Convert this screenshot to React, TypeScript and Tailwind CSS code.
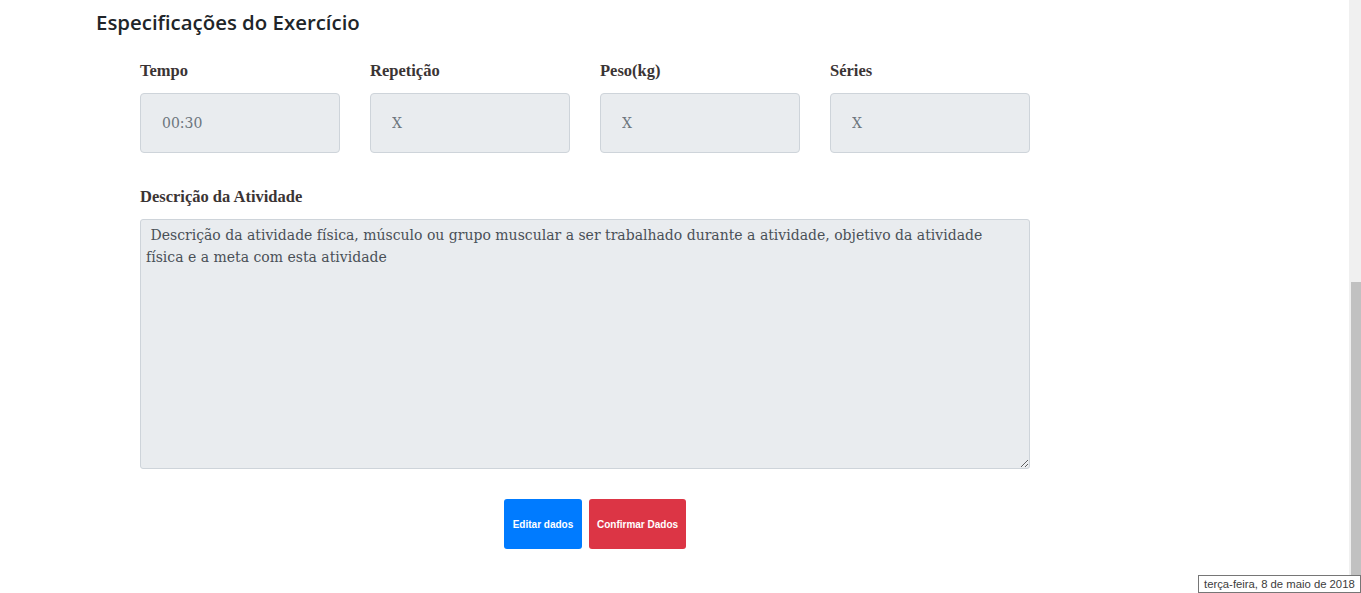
import React from 'react';

const fields = [
  { label: 'Tempo', value: '00:30' },
  { label: 'Repetição', value: 'X' },
  { label: 'Peso(kg)', value: 'X' },
  { label: 'Séries', value: 'X' },
];

const labelFont = "font-['Liberation_Serif','DejaVu_Serif',serif]";
const fieldFont = "font-['DejaVu_Serif','Liberation_Serif',serif]";

export default function App() {
  return (
    <div className="relative flex h-[593px] w-full overflow-hidden bg-white">
      <main className="flex-1 pl-[96px] pt-[10px]">
        <h2 className="font-['Open_Sans','Lato',sans-serif] text-[20.4px] font-semibold leading-[24px] text-[#212529]">
          Especificações do Exercício
        </h2>

        {/* Campos do exercício */}
        <div className="mt-[26px] ml-[44px] grid w-[890px] grid-cols-4 gap-[30px]">
          {fields.map((f) => (
            <div key={f.label} className="flex flex-col">
              <label className={`${labelFont} mb-[11px] text-[16.5px] font-bold leading-[22px] text-[#3b3434]`}>
                {f.label}
              </label>
              <input
                readOnly
                value={f.value}
                className={`${fieldFont} h-[60px] w-full rounded-[4px] border border-[#ced4da] bg-[#e9ecef] px-[21px] text-[14px] text-[#6c757d] outline-none`}
              />
            </div>
          ))}
        </div>

        {/* Descrição */}
        <div className="mt-[33px] ml-[44px] flex w-[890px] flex-col">
          <label className={`${labelFont} mb-[11px] text-[16.5px] font-bold leading-[22px] text-[#3b3434]`}>
            Descrição da Atividade
          </label>
          <textarea
            readOnly
            value={
              ' Descrição da atividade física, músculo ou grupo muscular a ser trabalhado durante a atividade, objetivo da atividade\nfísica e a meta com esta atividade'
            }
            className={`${fieldFont} h-[250px] w-full resize-y rounded-[3px] border border-[#ced4da] bg-[#e9ecef] px-[5px] pt-[4px] text-[14px] leading-[22px] text-[#495057] outline-none`}
          />
        </div>

        <div className="mt-[30px] ml-[44px] flex w-[890px] justify-center gap-[7px] pl-[20px]">
          <button className="h-[50px] w-[78px] rounded-[3px] bg-[#007bff] font-['Liberation_Sans',Arial,sans-serif] text-[10px] font-bold text-white">
            Editar dados
          </button>
          <button className="h-[50px] w-[97px] rounded-[3px] bg-[#dc3545] font-['Liberation_Sans',Arial,sans-serif] text-[10px] font-bold text-white">
            Confirmar Dados
          </button>
        </div>
      </main>

      {/* Barra de rolagem */}
      <div className="flex w-[12px] flex-col bg-[#f0f0f0] pl-[2px] pt-[282px]">
        <div className="h-[300px] w-full bg-[#c1c1c1]" />
      </div>

      {/* Tooltip de data */}
      <div className="absolute bottom-0 right-0 w-[163px] whitespace-nowrap border border-[#767676] bg-white px-[5px] font-['Liberation_Sans',Arial,sans-serif] text-[11.3px] leading-[16px] text-[#3c3c3c]">
        terça-feira, 8 de maio de 2018
      </div>
    </div>
  );
}
